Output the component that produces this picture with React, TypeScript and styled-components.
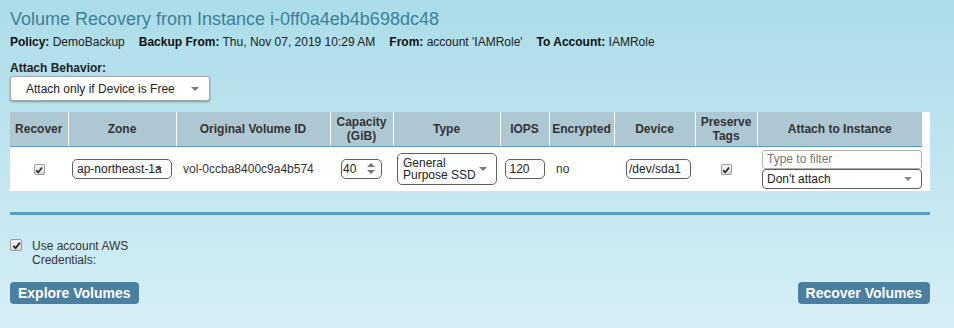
import React from 'react';
import styled, { createGlobalStyle } from 'styled-components';

const GlobalStyle = createGlobalStyle`
  html {
    min-height: 100%;
    background: linear-gradient(180deg, #abdce8 0%, #d6eff6 100%);
  }
  body {
    margin: 0;
    font-family: "Liberation Sans", Arial, sans-serif;
    color: #222;
  }
`;

const Page = styled.div`
  width: 920px;
  padding: 8px 0 0 10px;
`;

const Title = styled.h1`
  margin: 0;
  font-size: 18px;
  line-height: 22px;
  font-weight: normal;
  color: #3c8099;
`;

const InfoLine = styled.div`
  display: flex;
  gap: 14px;
  margin-top: 4px;
  font-size: 12px;
  line-height: 16px;
  b {
    color: #111;
  }
`;

const FieldLabel = styled.div`
  margin-top: 10px;
  font-size: 12px;
  line-height: 16px;
  font-weight: bold;
  color: #222;
`;

const Caret = styled.span<{ $color?: string; $size?: number }>`
  width: 0;
  height: 0;
  border-left: ${(p) => p.$size ?? 4}px solid transparent;
  border-right: ${(p) => p.$size ?? 4}px solid transparent;
  border-top: ${(p) => p.$size ?? 4}px solid ${(p) => p.$color ?? '#777'};
`;

const Dropdown = styled.div`
  box-sizing: border-box;
  width: 200px;
  height: 25px;
  display: flex;
  align-items: center;
  justify-content: space-between;
  padding: 0 10px 0 15px;
  background: #fff;
  border: 1px solid #a9a9a9;
  border-radius: 3px;
  box-shadow: 0 1px 2px rgba(0, 0, 0, 0.35);
  font-size: 12px;
`;

const TableWrap = styled.div`
  margin-top: 11px;
  width: 920px;
  padding-right: 8px;
  box-sizing: border-box;
  background: #fff;
`;

const Table = styled.table`
  border-collapse: collapse;
  table-layout: fixed;
  width: 912px;
  font-size: 12px;
`;

const Col = styled.col<{ $w: number }>`
  width: ${(p) => p.$w}px;
`;

const Th = styled.th`
  height: 34px;
  padding: 0;
  background: #adc8d3;
  color: #333;
  font-weight: bold;
  line-height: 14px;
  text-align: center;
  border-left: 1px solid #fff;
  border-bottom: 1px solid #5b9ec4;
  &:first-child {
    border-left: none;
  }
`;

const Td = styled.td<{ $align?: string; $pad?: number }>`
  height: 44px;
  padding: 0 0 0 ${(p) => p.$pad ?? 0}px;
  text-align: ${(p) => p.$align ?? 'left'};
  vertical-align: middle;
  color: #333;
`;

const CheckBox = styled.span<{ $size: number }>`
  display: inline-flex;
  align-items: center;
  justify-content: center;
  box-sizing: border-box;
  width: ${(p) => p.$size}px;
  height: ${(p) => p.$size}px;
  border: 1px solid #9a9a9a;
  border-radius: 2px;
  background: linear-gradient(180deg, #f6f6f6, #d8d8d8);
  vertical-align: middle;
`;

const Check = ({ size }: { size: number }) => (
  <CheckBox $size={size}>
    <svg width={size - 3} height={size - 3} viewBox="0 0 10 10">
      <path d="M1.5 5.5 L4 8 L8.8 1.8" fill="none" stroke="#222" strokeWidth="2" />
    </svg>
  </CheckBox>
);

const FieldBox = styled.div<{ $w: number; $h?: number; $light?: boolean; $radius?: number }>`
  position: relative;
  box-sizing: border-box;
  display: inline-flex;
  align-items: center;
  width: ${(p) => p.$w}px;
  height: ${(p) => p.$h ?? 20}px;
  padding: 0 4px;
  border: 1px solid ${(p) => (p.$light ? '#b0b0b0' : '#5e5e5e')};
  border-radius: ${(p) => p.$radius ?? 5}px;
  background: #fff;
  overflow: hidden;
  white-space: nowrap;
  font-size: 12px;
  color: #222;
  vertical-align: middle;
  text-align: left;
`;

const OverCaret = styled.span<{ $right: number; $top: number }>`
  position: absolute;
  right: ${(p) => p.$right}px;
  top: ${(p) => p.$top}px;
  display: flex;
`;

const Spinner = styled.span`
  position: absolute;
  right: 6px;
  top: 3px;
  display: flex;
  flex-direction: column;
  gap: 3px;
`;

const UpCaret = styled.span`
  width: 0;
  height: 0;
  border-left: 4px solid transparent;
  border-right: 4px solid transparent;
  border-bottom: 4px solid #777;
`;

const TypeBox = styled(FieldBox)`
  flex-direction: column;
  align-items: flex-start;
  justify-content: flex-start;
  padding: 3px 5px;
  line-height: 12px;
`;

const AttachStack = styled.div`
  display: flex;
  flex-direction: column;
`;

const Placeholder = styled.span`
  color: #777;
`;

const Rule = styled.div`
  margin-top: 21px;
  height: 3px;
  background: #5b9cc2;
`;

const CredRow = styled.div`
  display: flex;
  align-items: flex-start;
  gap: 10px;
  margin-top: 24px;
  font-size: 12px;
  line-height: 14px;
  color: #333;
`;

const CredLabel = styled.span`
  width: 105px;
`;

const ButtonBar = styled.div`
  display: flex;
  justify-content: space-between;
  margin-top: 15px;
`;

const ActionButton = styled.button`
  height: 22px;
  padding: 0 8px;
  border: none;
  border-radius: 4px;
  background: #4a7fa0;
  color: #fff;
  font-family: "Liberation Sans", Arial, sans-serif;
  font-size: 14px;
  font-weight: bold;
  cursor: pointer;
`;

const columns: [string, number][] = [
  ['Recover', 58],
  ['Zone', 108],
  ['Original Volume ID', 154],
  ['Capacity (GiB)', 63],
  ['Type', 107],
  ['IOPS', 49],
  ['Encrypted', 65],
  ['Device', 81],
  ['Preserve Tags', 62],
  ['Attach to Instance', 165],
];

const headerText = (name: string) => {
  const [first, ...rest] = name.split(' ');
  if (name === 'Capacity (GiB)' || name === 'Preserve Tags') {
    return (
      <>
        {first}
        <br />
        {rest.join(' ')}
      </>
    );
  }
  return name;
};

const App = (): JSX.Element => {
  return (
    <Page>
      <GlobalStyle />
      <Title>Volume Recovery from Instance i-0ff0a4eb4b698dc48</Title>
      <InfoLine>
        <span>
          <b>Policy:</b> DemoBackup
        </span>
        <span>
          <b>Backup From:</b> Thu, Nov 07, 2019 10:29 AM
        </span>
        <span>
          <b>From:</b> account 'IAMRole'
        </span>
        <span>
          <b>To Account:</b> IAMRole
        </span>
      </InfoLine>

      <FieldLabel>Attach Behavior:</FieldLabel>
      <Dropdown>
        <span>Attach only if Device is Free</span>
        <Caret />
      </Dropdown>

      <TableWrap>
        <Table>
          <colgroup>
            {columns.map(([name, w]) => (
              <Col key={name} $w={w} />
            ))}
          </colgroup>
          <thead>
            <tr>
              {columns.map(([name]) => (
                <Th key={name}>{headerText(name)}</Th>
              ))}
            </tr>
          </thead>
          <tbody>
            <tr>
              <Td $align="center">
                <Check size={11} />
              </Td>
              <Td $pad={4}>
                <FieldBox $w={100}>
                  ap-northeast-1a
                  <OverCaret $right={9} $top={7}>
                    <Caret $color="#555" $size={3} />
                  </OverCaret>
                </FieldBox>
              </Td>
              <Td $pad={7}>vol-0ccba8400c9a4b574</Td>
              <Td $align="center">
                <FieldBox $w={41} style={{ paddingLeft: 1 }}>
                  40
                  <Spinner>
                    <UpCaret />
                    <Caret />
                  </Spinner>
                </FieldBox>
              </Td>
              <Td $pad={4}>
                <TypeBox $w={100} $h={32}>
                  <span>General</span>
                  <span>Purpose SSD</span>
                  <OverCaret $right={9} $top={13}>
                    <Caret />
                  </OverCaret>
                </TypeBox>
              </Td>
              <Td $align="center">
                <FieldBox $w={40}>120</FieldBox>
              </Td>
              <Td $pad={7}>no</Td>
              <Td $pad={12}>
                <FieldBox $w={65} style={{ paddingLeft: 2 }}>
                  /dev/sda1
                </FieldBox>
              </Td>
              <Td $align="center">
                <Check size={11} />
              </Td>
              <Td $pad={5}>
                <AttachStack>
                  <FieldBox $w={160} $h={19} $light $radius={3}>
                    <Placeholder>Type to filter</Placeholder>
                  </FieldBox>
                  <FieldBox $w={160} $h={20} $radius={4}>
                    Don't attach
                    <OverCaret $right={9} $top={7}>
                      <Caret $color="#888" />
                    </OverCaret>
                  </FieldBox>
                </AttachStack>
              </Td>
            </tr>
          </tbody>
        </Table>
      </TableWrap>

      <Rule />

      <CredRow>
        <Check size={12} />
        <CredLabel>Use account AWS Credentials:</CredLabel>
      </CredRow>

      <ButtonBar>
        <ActionButton>Explore Volumes</ActionButton>
        <ActionButton>Recover Volumes</ActionButton>
      </ButtonBar>
    </Page>
  );
};

export default App;
